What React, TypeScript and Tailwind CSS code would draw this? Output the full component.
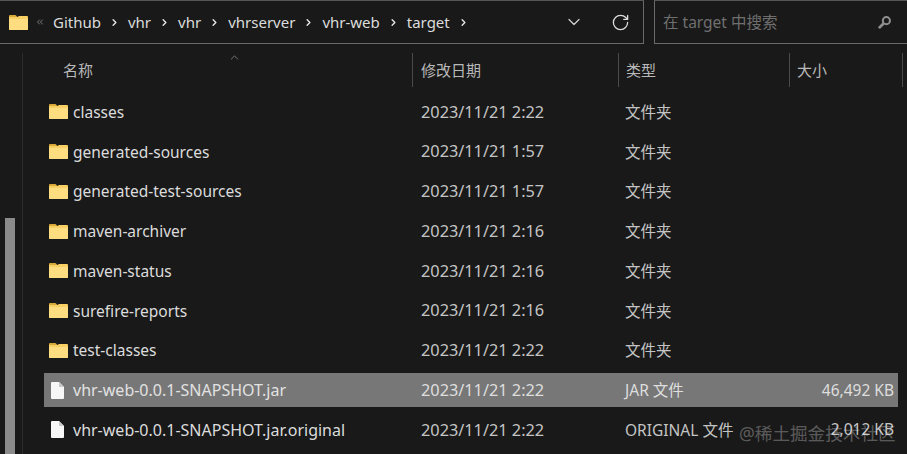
import { ChevronDown, ChevronRight, ChevronUp, ChevronsLeft, RotateCw } from "lucide-react";

type FileRow = {
  name: string;
  date: string;
  kind: string;
  size?: string;
  file?: boolean;
  selected?: boolean;
};

const rows: FileRow[] = [
  { name: "classes", date: "2023/11/21 2:22", kind: "文件夹" },
  { name: "generated-sources", date: "2023/11/21 1:57", kind: "文件夹" },
  { name: "generated-test-sources", date: "2023/11/21 1:57", kind: "文件夹" },
  { name: "maven-archiver", date: "2023/11/21 2:16", kind: "文件夹" },
  { name: "maven-status", date: "2023/11/21 2:16", kind: "文件夹" },
  { name: "surefire-reports", date: "2023/11/21 2:16", kind: "文件夹" },
  { name: "test-classes", date: "2023/11/21 2:22", kind: "文件夹" },
  { name: "vhr-web-0.0.1-SNAPSHOT.jar", date: "2023/11/21 2:22", kind: "JAR 文件", size: "46,492 KB", file: true, selected: true },
  { name: "vhr-web-0.0.1-SNAPSHOT.jar.original", date: "2023/11/21 2:22", kind: "ORIGINAL 文件", size: "2,012 KB", file: true },
];

const crumbs = ["Github", "vhr", "vhr", "vhrserver", "vhr-web", "target"];

function FolderIcon() {
  return (
    <svg viewBox="0 0 19 15" className="h-[15px] w-[19px]">
      <path d="M0 1a1 1 0 0 1 1-1h5.5l2 2H0Z" fill="#d9a93a" />
      <path d="M0 2h8.5l1.5-1h8a1 1 0 0 1 1 1v12a1 1 0 0 1-1 1H1a1 1 0 0 1-1-1Z" fill="#f7cf62" />
      <path d="M0 4h19v10a1 1 0 0 1-1 1H1a1 1 0 0 1-1-1Z" fill="#fedd80" />
    </svg>
  );
}

function FileIcon() {
  return (
    <svg viewBox="0 0 13 17" className="h-[17px] w-[13px]">
      <path d="M0 1a1 1 0 0 1 1-1h7l5 5v11a1 1 0 0 1-1 1H1a1 1 0 0 1-1-1Z" fill="#f7f7f7" />
      <path d="M8 0l5 5H8Z" fill="#c9c9c9" />
    </svg>
  );
}

function SearchIcon() {
  return (
    <svg viewBox="0 0 16 16" className="h-[15px] w-[15px]" fill="none" stroke="#8f8f8f">
      <circle cx="10" cy="6" r="3.8" strokeWidth="2.2" />
      <path d="M7 9l-5 5" strokeWidth="3" />
    </svg>
  );
}

function HeaderCell({ label, className }: { label: string; className: string }) {
  return (
    <div className={`flex h-[34px] items-center border-l border-[#4a4a4a] ${className}`}>{label}</div>
  );
}

export default function App() {
  return (
    <div className="relative flex h-[454px] w-[907px] flex-col overflow-hidden bg-[#191919] font-['Noto_Sans','Noto_Sans_CJK_SC',sans-serif] text-[15.5px] text-[#d6d6d6]">
      <div className="flex h-[44px] shrink-0 gap-[10px] bg-[#191919]">
        <div className="flex w-[644px] items-center border-y border-r border-y-[#6a6a6a] border-r-[#6a6a6a] border-t-[#555] pl-[9px]">
          <FolderIcon />
          <ChevronsLeft className="ml-[7px] h-[10px] w-[10px] text-[#8a8a8a]" />
          <div className="ml-[8px] flex items-center text-[15px] text-[#dcdcdc]">
            {crumbs.map((c, i) => (
              <div key={`${c}-${i}`} className="flex items-center">
                <span>{c}</span>
                <ChevronRight className="mx-[8px] h-[11px] w-[11px] text-[#e6e6e6]" strokeWidth={3} />
              </div>
            ))}
          </div>
          <ChevronDown className="ml-auto h-[20px] w-[20px] text-[#cfcfcf]" strokeWidth={1.5} />
          <RotateCw className="ml-[27px] mr-[13px] h-[19px] w-[19px] text-[#dedede]" strokeWidth={1.6} />
        </div>
        <div className="flex flex-1 items-center justify-between border-y border-l border-y-[#6a6a6a] border-l-[#6a6a6a] border-t-[#555] pl-[8px] pr-[15px] text-[#6f6f6f]">
          <span className="pt-px">在 target 中搜索</span>
          <SearchIcon />
        </div>
      </div>

      <div className="flex flex-1">
        <div className="mt-[9px] flex w-[23px] shrink-0 border-r border-[#2c2c2c] pl-[5px] pt-[165px]">
          <div className="h-[250px] w-[10px] bg-[#8b8b8b]" />
        </div>

        <div className="flex-1 pl-[21px] pt-[9px]">
          <div className="grid grid-cols-[368px_206px_171px_114px] text-[15px] text-[#b9b9b9]">
            <div className="relative flex h-[34px] items-center pl-[19px]">
              名称
              <ChevronUp className="absolute left-[184px] top-[-2px] h-[13px] w-[13px] text-[#8a8a8a]" strokeWidth={1.5} />
            </div>
            <HeaderCell label="修改日期" className="pl-2" />
            <HeaderCell label="类型" className="pl-[7px]" />
            <HeaderCell label="大小" className="border-r pl-[7px]" />
          </div>

          <div className="mt-[5px] w-[854px]">
            {rows.map((r) => (
              <div
                key={r.name}
                className={`grid h-[39.75px] grid-cols-[368px_205px_1fr_auto] items-center ${r.selected ? "relative" : ""}`}
              >
                {r.selected && <div className="absolute inset-x-0 top-[3px] h-[34px] bg-[#777777]" />}
                <div className={`relative flex items-center ${r.file ? "pl-[7px]" : "pl-[5px]"}`}>
                  <div className={r.file ? "mr-[9px] flex" : "mr-[5px] flex"}>
                    {r.file ? <FileIcon /> : <FolderIcon />}
                  </div>
                  <span className={`${r.file ? "text-[16px]" : "pt-px text-[15.5px]"} ${r.selected ? "text-[#e2e2e2]" : "text-[#dcdcdc]"}`}>{r.name}</span>
                </div>
                <span className={`relative pl-[9px] text-[16.3px] ${r.selected ? "text-[#dedede]" : "text-[#c4c4c4]"}`}>{r.date}</span>
                <span className={`relative pl-[8px] ${r.selected ? "text-[#dedede]" : "pt-px text-[#c4c4c4]"}`}>{r.kind}</span>
                <span className={`relative pr-[4px] text-right ${r.selected ? "text-[#dedede]" : "text-[#c4c4c4]"}`}>{r.size}</span>
              </div>
            ))}
          </div>
        </div>
      </div>

      <div className="absolute left-[739px] top-[421px] text-[17.6px] leading-[24px] text-white/30">@稀土掘金技术社区</div>
    </div>
  );
}
